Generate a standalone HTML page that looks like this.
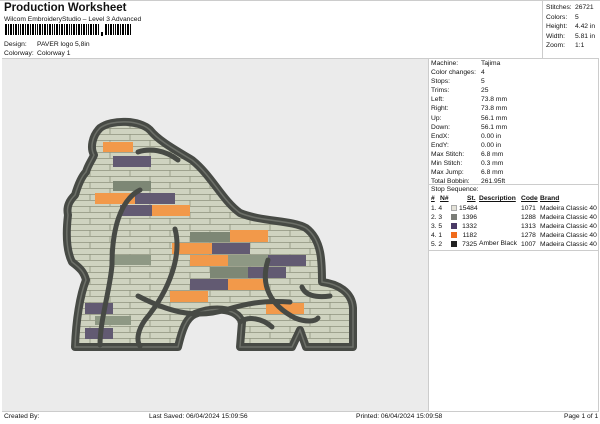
<!DOCTYPE html>
<html><head><meta charset="utf-8"><style>
*{margin:0;padding:0;box-sizing:border-box}
body{width:600px;height:424px;background:#fff;font-family:"Liberation Sans",sans-serif;color:#111;position:relative;overflow:hidden}
.a{position:absolute;white-space:nowrap;font-size:6.7px;line-height:8px}
</style></head><body>
<div class="a" style="left:4px;top:2px;font-size:11.5px;line-height:13px;font-weight:bold">Production Worksheet</div>
<div class="a" style="left:4px;top:16px">Wilcom EmbroideryStudio – Level 3 Advanced</div>
<svg class="a" style="left:5px;top:24px" width="130" height="14">
<g fill="#000">
<rect x="0" y="0" width="2" height="11"/><rect x="3" y="0" width="1" height="11"/><rect x="5" y="0" width="2" height="11"/><rect x="8" y="0" width="1" height="11"/><rect x="10" y="0" width="2" height="11"/><rect x="13" y="0" width="1" height="11"/><rect x="15" y="0" width="1" height="11"/><rect x="17" y="0" width="2" height="11"/><rect x="20" y="0" width="1" height="11"/><rect x="22" y="0" width="2" height="11"/><rect x="25" y="0" width="1" height="11"/><rect x="27" y="0" width="2" height="11"/><rect x="30" y="0" width="1" height="11"/><rect x="32" y="0" width="1" height="11"/><rect x="34" y="0" width="2" height="11"/><rect x="37" y="0" width="1" height="11"/><rect x="39" y="0" width="2" height="11"/><rect x="42" y="0" width="1" height="11"/><rect x="44" y="0" width="2" height="11"/><rect x="47" y="0" width="1" height="11"/><rect x="49" y="0" width="1" height="11"/><rect x="51" y="0" width="2" height="11"/><rect x="54" y="0" width="1" height="11"/><rect x="56" y="0" width="2" height="11"/><rect x="59" y="0" width="1" height="11"/><rect x="61" y="0" width="2" height="11"/><rect x="64" y="0" width="1" height="11"/><rect x="66" y="0" width="1" height="11"/><rect x="68" y="0" width="2" height="11"/><rect x="71" y="0" width="1" height="11"/><rect x="73" y="0" width="2" height="11"/><rect x="76" y="0" width="1" height="11"/><rect x="78" y="0" width="2" height="11"/><rect x="81" y="0" width="1" height="11"/><rect x="83" y="0" width="1" height="11"/><rect x="85" y="0" width="2" height="11"/><rect x="88" y="0" width="1" height="11"/><rect x="90" y="0" width="2" height="11"/><rect x="93" y="0" width="1" height="11"/>
<rect x="96" y="8" width="2" height="4"/>
<rect x="100" y="0" width="2" height="11"/><rect x="103" y="0" width="1" height="11"/><rect x="105" y="0" width="2" height="11"/><rect x="108" y="0" width="1" height="11"/><rect x="110" y="0" width="1" height="11"/><rect x="112" y="0" width="2" height="11"/><rect x="115" y="0" width="1" height="11"/><rect x="117" y="0" width="2" height="11"/><rect x="120" y="0" width="1" height="11"/><rect x="122" y="0" width="2" height="11"/><rect x="125" y="0" width="1" height="11"/>
</g></svg>
<div class="a" style="left:4px;top:41px">Design:</div><div class="a" style="left:37px;top:41px">PAVER logo 5,8in</div>
<div class="a" style="left:4px;top:50px">Colorway:</div><div class="a" style="left:37px;top:50px">Colorway 1</div>
<div style="position:absolute;left:2px;top:58px;width:427px;height:353px;background:#ebebeb;border-top:1px solid #ccc"></div>
<div style="position:absolute;left:428px;top:58px;width:171px;height:353px;border:1px solid #ccc;border-bottom:none"></div>
<div style="position:absolute;left:542px;top:1px;width:57px;height:57px;border-left:1px solid #ccc"></div>
<div style="position:absolute;left:0;top:0;width:600px;height:1px;background:#ccc"></div>
<div class="a" style="left:546px;top:3px;line-height:9.6px">Stitches:<br>Colors:<br>Height:<br>Width:<br>Zoom:</div>
<div class="a" style="left:575px;top:3px;line-height:9.6px">26721<br>5<br>4.42 in<br>5.81 in<br>1:1</div>
<div class="a" style="left:431px;top:59px;line-height:9.1px">Machine:<br>Color changes:<br>Stops:<br>Trims:<br>Left:<br>Right:<br>Up:<br>Down:<br>EndX:<br>EndY:<br>Max Stitch:<br>Min Stitch:<br>Max Jump:<br>Total Bobbin:</div>
<div class="a" style="left:481px;top:59px;line-height:9.1px">Tajima<br>4<br>5<br>25<br>73.8 mm<br>73.8 mm<br>56.1 mm<br>56.1 mm<br>0.00 in<br>0.00 in<br>6.8 mm<br>0.3 mm<br>6.8 mm<br>261.95ft</div>
<div style="position:absolute;left:429px;top:184px;width:170px;height:1px;background:#ccc"></div>
<div class="a" style="left:431px;top:186px">Stop Sequence:</div>
<div class="a" style="left:431px;top:195px;font-weight:bold;text-decoration:underline">#</div>
<div class="a" style="left:440px;top:195px;font-weight:bold;text-decoration:underline">N#</div>
<div class="a" style="left:467px;top:195px;font-weight:bold;text-decoration:underline">St.</div>
<div class="a" style="left:479px;top:195px;font-weight:bold;text-decoration:underline">Description</div>
<div class="a" style="left:521px;top:195px;font-weight:bold;text-decoration:underline">Code</div>
<div class="a" style="left:540px;top:195px;font-weight:bold;text-decoration:underline">Brand</div>
<div class="a" style="left:431px;top:204px;line-height:9.1px">1. 4<br>2. 3<br>3. 5<br>4. 1<br>5. 2</div>
<div style="position:absolute;left:451px;top:205px;width:6px;height:6px;background:#e4e2d8;border:1px solid #aaa"></div>
<div style="position:absolute;left:451px;top:214px;width:6px;height:6px;background:#7b7d78"></div>
<div style="position:absolute;left:451px;top:223px;width:6px;height:6px;background:#4a3a66"></div>
<div style="position:absolute;left:451px;top:232px;width:6px;height:6px;background:#f06b1c"></div>
<div style="position:absolute;left:451px;top:241px;width:6px;height:6px;background:#222"></div>
<div class="a" style="left:459px;top:204px;width:18px;text-align:right;line-height:9.1px">15484<br>1396<br>1332<br>1182<br>7325</div>
<div class="a" style="left:479px;top:240px">Amber Black</div>
<div class="a" style="left:521px;top:204px;line-height:9.1px">1071<br>1288<br>1313<br>1278<br>1007</div>
<div class="a" style="left:540px;top:204px;line-height:9.1px">Madeira Classic 40<br>Madeira Classic 40<br>Madeira Classic 40<br>Madeira Classic 40<br>Madeira Classic 40</div>
<div style="position:absolute;left:429px;top:250px;width:170px;height:1px;background:#ccc"></div>
<div style="position:absolute;left:2px;top:411px;width:597px;height:1px;background:#ccc"></div>
<div class="a" style="left:4px;top:413px">Created By:</div>
<div class="a" style="left:149px;top:413px">Last Saved: 06/04/2024 15:09:56</div>
<div class="a" style="left:356px;top:413px">Printed: 06/04/2024 15:09:58</div>
<div class="a" style="left:564px;top:413px">Page 1 of 1</div>

<svg style="position:absolute;left:0;top:0" width="430" height="411">
<defs>
<pattern id="br" width="40" height="12" patternUnits="userSpaceOnUse" x="0" y="2">
<rect width="40" height="12" fill="#cfd3c0"/>
<path d="M0 0.5H40M0 6.5H40M10 0V6M30 6V12" stroke="#8f947f" stroke-width="0.8" fill="none"/>
</pattern>
<clipPath id="cl"><path id="g" d="M100,128 C112,119 140,120 150,130 C158,140 172,148 192,160 C212,176 222,200 240,213 C262,222 292,220 306,228 C322,240 322,262 322,282 C338,284 352,292 353,308 L353,347 L306,347 L300,330 L292,347 L240,347 L242,322 C236,306 210,308 195,314 C186,318 182,330 178,347 L75,347 C76,320 80,295 86,280 C84,272 80,268 72,262 C66,250 66,232 68,215 C66,206 70,200 75,195 C78,185 82,176 86,172 C88,165 92,160 94,155 C90,148 92,136 100,128 Z"/></clipPath>
</defs>
<use href="#g" fill="url(#br)"/>
<g clip-path="url(#cl)">
<rect x="103" y="142" width="30" height="10" fill="#f2994a"/>
<rect x="113" y="156" width="38" height="11" fill="#625a72"/>
<rect x="113" y="181" width="38" height="10" fill="#7d8775"/>
<rect x="95" y="193" width="40" height="11" fill="#f2994a"/>
<rect x="135" y="193" width="40" height="11" fill="#625a72"/>
<rect x="120" y="205" width="32" height="11" fill="#625a72"/>
<rect x="152" y="205" width="38" height="11" fill="#f2994a"/>
<rect x="190" y="232" width="40" height="10" fill="#7d8775"/>
<rect x="230" y="230" width="38" height="12" fill="#f2994a"/>
<rect x="172" y="243" width="40" height="11" fill="#f2994a"/>
<rect x="212" y="243" width="38" height="11" fill="#625a72"/>
<rect x="113" y="255" width="38" height="10" fill="#8e9884"/>
<rect x="190" y="255" width="38" height="11" fill="#f2994a"/>
<rect x="228" y="255" width="40" height="11" fill="#8e9884"/>
<rect x="268" y="255" width="38" height="11" fill="#625a72"/>
<rect x="210" y="267" width="38" height="11" fill="#7d8775"/>
<rect x="248" y="267" width="38" height="11" fill="#625a72"/>
<rect x="190" y="279" width="38" height="11" fill="#625a72"/>
<rect x="228" y="279" width="40" height="11" fill="#f2994a"/>
<rect x="170" y="291" width="38" height="11" fill="#f2994a"/>
<rect x="266" y="303" width="38" height="11" fill="#f2994a"/>
<rect x="85" y="303" width="28" height="11" fill="#625a72"/>
<rect x="95" y="316" width="36" height="9" fill="#8e9884"/>
<rect x="85" y="328" width="28" height="11" fill="#625a72"/>
</g>
<use href="#g" fill="none" stroke="#474a45" stroke-width="8" stroke-linejoin="round"/>
<use href="#g" fill="none" stroke="#6d7069" stroke-width="1.5"/>
<g fill="none" stroke="#474a45" stroke-width="5" stroke-linecap="round">
<path d="M138,152 C150,148 165,150 178,160"/>
<path d="M140,190 C120,200 112,230 112,265 C110,290 100,320 100,345"/>
<path d="M175,229 C182,255 170,290 145,320 C138,330 136,340 140,346"/>
<path d="M138,296 C165,310 195,320 225,310 C245,304 262,300 290,302"/>
<path d="M268,260 C260,285 270,305 295,318 C305,322 315,322 318,318"/>
<path d="M302,287 C305,295 315,298 330,296"/>
<path d="M240,322 C248,316 262,318 272,327"/>
</g>
</svg>
</body></html>
